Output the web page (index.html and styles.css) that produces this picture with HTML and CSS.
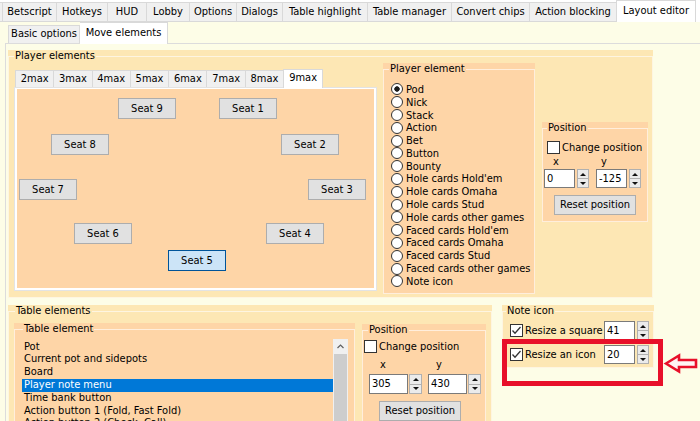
FILE: index.html
```html
<!DOCTYPE html>
<html>
<head>
<meta charset="utf-8">
<link rel="stylesheet" href="styles.css">
</head>
<body>
<div class="toptabs">
  <div class="ttab t0"></div>
  <div class="ttab t1">Betscript</div>
  <div class="ttab t2">Hotkeys</div>
  <div class="ttab t3">HUD</div>
  <div class="ttab t4">Lobby</div>
  <div class="ttab t5">Options</div>
  <div class="ttab t6">Dialogs</div>
  <div class="ttab t7">Table highlight</div>
  <div class="ttab t8">Table manager</div>
  <div class="ttab t9">Convert chips</div>
  <div class="ttab t10">Action blocking</div>
  <div class="ttab t11 sel">Layout editor</div>
</div>
<div class="page">
  <div class="subtabs">
    <div class="stab">Basic options</div>
    <div class="stab sel">Move elements</div>
  </div>
  <div class="subpage">
    <section class="gb gb-pe">
      <div class="gb-title">Player elements</div>
      <div class="pe-body">
        <div class="seattabs">
          <div class="mtabs">
            <div class="mtab">2max</div>
            <div class="mtab">3max</div>
            <div class="mtab">4max</div>
            <div class="mtab">5max</div>
            <div class="mtab">6max</div>
            <div class="mtab">7max</div>
            <div class="mtab">8max</div>
            <div class="mtab sel">9max</div>
          </div>
          <div class="mpanel">
            <div class="canvas">
              <div class="seat s9">Seat 9</div>
              <div class="seat s1">Seat 1</div>
              <div class="seat s8">Seat 8</div>
              <div class="seat s2">Seat 2</div>
              <div class="seat s7">Seat 7</div>
              <div class="seat s3">Seat 3</div>
              <div class="seat s6">Seat 6</div>
              <div class="seat s4">Seat 4</div>
              <div class="seat s5 on">Seat 5</div>
            </div>
          </div>
        </div>
        <section class="gb gb-radio">
          <div class="gb-title">Player element</div>
          <div class="radios">
            <div class="radio on"><i></i>Pod</div>
            <div class="radio"><i></i>Nick</div>
            <div class="radio"><i></i>Stack</div>
            <div class="radio"><i></i>Action</div>
            <div class="radio"><i></i>Bet</div>
            <div class="radio"><i></i>Button</div>
            <div class="radio"><i></i>Bounty</div>
            <div class="radio"><i></i>Hole cards Hold'em</div>
            <div class="radio"><i></i>Hole cards Omaha</div>
            <div class="radio"><i></i>Hole cards Stud</div>
            <div class="radio"><i></i>Hole cards other games</div>
            <div class="radio"><i></i>Faced cards Hold'em</div>
            <div class="radio"><i></i>Faced cards Omaha</div>
            <div class="radio"><i></i>Faced cards Stud</div>
            <div class="radio"><i></i>Faced cards other games</div>
            <div class="radio"><i></i>Note icon</div>
          </div>
        </section>
        <section class="gb gb-pos1">
          <div class="gb-title">Position</div>
          <div class="chk"><i class="box"></i>Change position</div>
          <div class="spins">
            <div class="spincol">
              <div class="lbl lx">x</div>
              <div class="spin"><div class="inp">0</div><div class="sb"><span class="up"></span><span class="dn"></span></div></div>
            </div>
            <div class="spincol">
              <div class="lbl ly">y</div>
              <div class="spin"><div class="inp">-125</div><div class="sb"><span class="up"></span><span class="dn"></span></div></div>
            </div>
          </div>
          <div class="btn">Reset position</div>
        </section>
      </div>
    </section>
    <div class="bottom">
      <section class="gb gb-te">
        <div class="gb-title">Table elements</div>
        <div class="te-body">
          <section class="gb gb-list">
            <div class="gb-title">Table element</div>
            <div class="listbox">
              <div class="items">
                <div>Pot</div>
                <div>Current pot and sidepots</div>
                <div>Board</div>
                <div class="sel">Player note menu</div>
                <div>Time bank button</div>
                <div>Action button 1 (Fold, Fast Fold)</div>
                <div>Action button 2 (Check, Call)</div>
              </div>
              <div class="vscroll">
                <div class="sup"><svg width="7" height="5" viewBox="0 0 7 5"><polyline points="0.5,4 3.5,1 6.5,4" fill="none" stroke="#606060" stroke-width="1.2"/></svg></div>
                <div class="thumb"></div>
              </div>
            </div>
          </section>
          <section class="gb gb-pos2">
            <div class="gb-title">Position</div>
            <div class="chk"><i class="box"></i>Change position</div>
            <div class="spins">
              <div class="spincol">
                <div class="lbl lx">x</div>
                <div class="spin"><div class="inp">305</div><div class="sb"><span class="up"></span><span class="dn"></span></div></div>
              </div>
              <div class="spincol">
                <div class="lbl ly">y</div>
                <div class="spin"><div class="inp">430</div><div class="sb"><span class="up"></span><span class="dn"></span></div></div>
              </div>
            </div>
            <div class="btn">Reset position</div>
          </section>
        </div>
      </section>
      <section class="gb gb-note">
        <div class="gb-title">Note icon</div>
        <div class="nrow r1">
          <i class="box checked"><svg width="11" height="11" viewBox="0 0 11 11"><polyline points="1.5,5.5 4,8.2 9.5,2" fill="none" stroke="#333" stroke-width="1.3"/></svg></i>
          <span class="nlabel">Resize a square</span>
          <div class="spin"><div class="inp">41</div><div class="sb"><span class="up"></span><span class="dn"></span></div></div>
        </div>
        <div class="nrow r2">
          <i class="box checked"><svg width="11" height="11" viewBox="0 0 11 11"><polyline points="1.5,5.5 4,8.2 9.5,2" fill="none" stroke="#333" stroke-width="1.3"/></svg></i>
          <span class="nlabel">Resize an icon</span>
          <div class="spin"><div class="inp">20</div><div class="sb"><span class="up"></span><span class="dn"></span></div></div>
        </div>
      </section>
    </div>
  </div>
</div>
<div class="redbox"></div>
<svg class="arrow" width="40" height="26" viewBox="0 0 40 26">
  <polygon points="6,13.5 19,5.5 19,10 36,10 36,17 19,17 19,21.5" fill="#fff4f4" stroke="#e8102a" stroke-width="2.6" stroke-linejoin="miter"/>
</svg>
</body>
</html>
```

FILE: styles.css
```css
* { box-sizing: border-box; margin: 0; padding: 0; }
html, body { width: 700px; height: 421px; overflow: hidden; }
body {
  margin: 0;
  position: relative;
  background: #fdfde7;
  font-family: "DejaVu Sans Condensed", "DejaVu Sans", sans-serif;
  font-stretch: condensed;
  font-size: 11px;
  color: #000;
}

/* top tabs */
.toptabs { display: flex; align-items: flex-end; height: 22px; background: #fff; }
.ttab {
  height: 20px;
  background: #f0f0f0;
  border: 1px solid #d9d9d9;
  border-left: none;
  line-height: 18px;
  text-align: center;
  white-space: nowrap;
  overflow: hidden;
}
.t0 { width: 3px; border-left: none; }
.t1 { width: 54px; }
.t2 { width: 51px; }
.t3 { width: 39px; }
.t4 { width: 43px; }
.t5 { width: 47px; }
.t6 { width: 46px; }
.t7 { width: 85px; }
.t8 { width: 84px; }
.t9 { width: 78px; }
.t10 { width: 87px; }
.ttab.sel {
  width: 80px;
  height: 22px;
  background: #fff;
  border: 1px solid #d9d9d9;
  border-bottom: none;
  line-height: 19px;
  margin-left: -1px;
  position: relative;
  z-index: 1;
}

/* sub tabs */
.subtabs { display: flex; align-items: flex-end; height: 21px; padding-left: 8px; }
.stab {
  height: 18px;
  width: 72px;
  background: #f0f0f0;
  border: 1px solid #d9d9d9;
  border-bottom: none;
  line-height: 16px;
  text-align: center;
  white-space: nowrap;
}
.stab.sel {
  width: 88px;
  height: 22px;
  background: #fff;
  border-left: none;
  line-height: 19px;
  margin-bottom: -1px;
  position: relative;
  z-index: 1;
}
.subpage {
  margin-left: 5px;
  border-left: 1px solid #dcdcdc;
  border-top: 1px solid #dcdcdc;
  height: 400px;
}

/* group boxes */
.gb { position: relative; }
.gb::before {
  content: "";
  position: absolute;
  left: 0; right: 0; top: 6px; bottom: 0;
  border: 1px solid rgba(255, 255, 255, 0.6);
  pointer-events: none;
}
.gb-title {
  position: relative;
  z-index: 1;
  display: inline-block;
  height: 12px;
  line-height: 12px;
  padding: 0 1px;
  background: inherit;
  white-space: nowrap;
  vertical-align: top;
}
.gb > .gb-title + * { }

.gb-pe { margin: 6px 0 0 2px; width: 645px; height: 248px; background: #fde7b4; }
.gb-pe > .gb-title { margin-left: 6px; }
.pe-body { display: flex; align-items: flex-start; }

/* seat tabs */
.seattabs { margin: 5px 0 0 6px; width: 363px; }
.mtabs { display: flex; align-items: flex-end; height: 19px; padding-left: 1px; }
.mtab {
  width: 38.3px;
  height: 17px;
  background: #f0f0f0;
  border: 1px solid #d9d9d9;
  border-right: none;
  border-bottom: none;
  line-height: 16px;
  text-align: center;
}
.mtab.sel {
  width: 40px;
  height: 19px;
  background: #fff;
  border-right: 1px solid #d9d9d9;
  line-height: 15px;
  margin-bottom: -1px;
  position: relative;
  z-index: 1;
}
.mpanel {
  height: 204px;
  background: #fff;
  border: 1px solid #e3e3e3;
  padding: 1px 2px 2px 2px;
}
.canvas { position: relative; height: 100%; background: #fed5a7; }
.seat {
  position: absolute;
  width: 58px;
  height: 21px;
  background: #e1e1e1;
  border: 1px solid #adadad;
  text-align: center;
  line-height: 19px;
}
.seat.on { background: #cce4f7; border-color: #005499; }
.s9 { left: 101px; top: 9px; }
.s1 { left: 202px; top: 9px; }
.s8 { left: 34px; top: 45px; }
.s2 { left: 264px; top: 45px; }
.s7 { left: 2px; top: 90px; }
.s3 { left: 291px; top: 90px; }
.s6 { left: 57px; top: 134px; }
.s4 { left: 249px; top: 134px; }
.s5 { left: 151px; top: 161px; }

/* radio list */
.gb-radio { margin-left: 6px; width: 152px; height: 231px; background: #fed5a7; }
.gb-radio > .gb-title { margin-left: 6px; }
.radios { margin-top: 7px; padding-left: 8px; }
.radio { display: flex; align-items: center; height: 12.8px; white-space: nowrap; }
.radio i {
  flex: none;
  width: 12px;
  height: 12px;
  border: 1px solid #333;
  border-radius: 50%;
  background: #fff;
  margin-right: 3px;
}
.radio.on i { background: radial-gradient(circle, #1a1a1a 0 2.4px, #fff 3px); }

/* checkbox */
.box {
  flex: none;
  display: inline-flex;
  align-items: center;
  justify-content: center;
  width: 13px;
  height: 13px;
  border: 1px solid #333;
  background: #fff;
}
.chk { display: flex; align-items: center; height: 13px; white-space: nowrap; }
.chk .box { margin-right: 2px; }

/* spin boxes */
.spins { display: flex; }
.spincol { display: flex; flex-direction: column; }
.lbl { height: 12px; line-height: 12px; }
.spin { display: flex; }
.inp {
  background: #fff;
  border: 1px solid #7a7a7a;
  padding-left: 2px;
  white-space: nowrap;
}
.sb {
  display: flex;
  flex-direction: column;
  border: 1px solid #b0b0b0;
  background: #ebebeb;
}
.sb span { flex: 1; display: flex; align-items: center; justify-content: center; }
.sb .up { border-bottom: 1px solid #b0b0b0; }
.sb .up::after {
  content: "";
  border-left: 3px solid transparent;
  border-right: 3px solid transparent;
  border-bottom: 3px solid #111;
}
.sb .dn::after {
  content: "";
  border-left: 3px solid transparent;
  border-right: 3px solid transparent;
  border-top: 3px solid #111;
}

.btn {
  width: 82px;
  height: 20px;
  background: #e1e1e1;
  border: 1px solid #adadad;
  text-align: center;
  line-height: 18px;
  white-space: nowrap;
}

/* upper position */
.gb-pos1 { margin: 59px 0 0 7px; width: 106px; height: 100px; background: #fed5a7; }
.gb-pos1 > .gb-title { margin-left: 5px; }
.gb-pos1 .chk { margin-top: 6px; padding-left: 5px; }
.gb-pos1 .spins { margin-top: 2px; padding-left: 2px; gap: 7px; }
.gb-pos1 .lx { padding-left: 9px; }
.gb-pos1 .ly { padding-left: 5px; }
.gb-pos1 .spin { margin-top: 1px; }
.gb-pos1 .inp { width: 31px; height: 19px; line-height: 17px; }
.gb-pos1 .sb { width: 12px; height: 19px; margin-left: 2px; }
.gb-pos1 .btn { margin: 7px 0 0 12px; }

/* bottom row */
.bottom { display: flex; margin: 7px 0 0 2px; gap: 10px; align-items: flex-start; }
.gb-te { width: 484px; height: 140px; background: #fde7b4; }
.gb-te > .gb-title { margin-left: 7px; }
.te-body { display: flex; align-items: flex-start; margin-top: 5px; }

.gb-list { margin-left: 6px; width: 341px; height: 120px; background: #fed5a7; }
.gb-list > .gb-title { margin-left: 9px; }
.listbox { display: flex; margin: 3px 0 0 8px; width: 326px; height: 100px; background: #fed5a7; }
.items { flex: 1; padding-top: 1.6px; }
.items div { height: 12.8px; line-height: 12.8px; padding-left: 2px; white-space: nowrap; }
.items .sel { background: #0078d7; color: #fff; }
.vscroll { width: 15px; display: flex; flex-direction: column; background: #f0f0f0; }
.sup { height: 15px; display: flex; align-items: center; justify-content: center; background: #f0f0f0; }
.thumb { flex: 1; background: #cdcdcd; margin: 0 1px; }

/* lower position */
.gb-pos2 { margin: 1px 0 0 7px; width: 124px; height: 110px; background: #fed5a7; }
.gb-pos2 > .gb-title { margin-left: 6px; }
.gb-pos2 .chk { margin-top: 3px; padding-left: 2px; }
.gb-pos2 .spins { margin-top: 6px; padding-left: 7px; gap: 6px; }
.gb-pos2 .lx { padding-left: 11px; }
.gb-pos2 .ly { padding-left: 8px; }
.gb-pos2 .spin { margin-top: 3px; }
.gb-pos2 .inp { width: 39px; height: 20px; line-height: 18px; }
.gb-pos2 .sb { width: 13px; height: 20px; margin-left: 1px; }
.gb-pos2 .btn { margin: 7px 0 0 17px; }

/* note icon */
.gb-note { width: 152px; height: 63px; background: #fde7b4; }
.gb-note > .gb-title { margin-left: 4px; }
.nrow { display: flex; align-items: center; height: 19px; padding: 0 5px 0 8px; }
.nrow.r1 { margin-top: 3px; }
.nrow.r2 { margin-top: 5px; }
.nrow .box { margin-right: 2px; }
.nlabel { flex: 1; white-space: nowrap; }
.gb-note .inp { width: 31px; height: 19px; line-height: 17px; }
.gb-note .sb { width: 12px; height: 19px; margin-left: 2px; }

/* annotation overlay */
.redbox {
  position: absolute;
  left: 502px;
  top: 339px;
  width: 161px;
  height: 47px;
  border: 5px solid #e8102a;
}
.arrow { position: absolute; left: 660px; top: 350px; }
```
